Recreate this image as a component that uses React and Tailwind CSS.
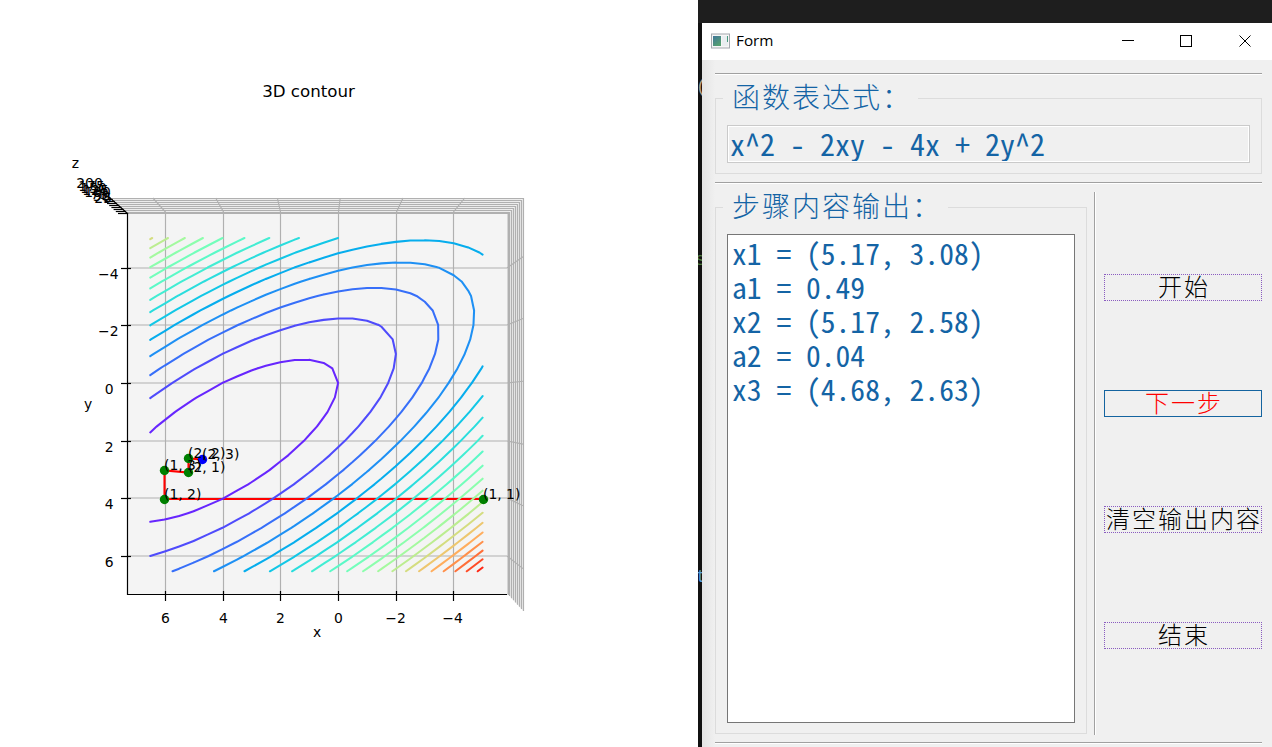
import React from "react";

const X = (x) => 338.1 - 28.9 * x;
const Y = (y) => 382.9 + 28.98 * y;
const f = (x, y) => x * x - 2 * x * y - 4 * x + 2 * y * y;

const rainbow = (t) => {
  const r = Math.min(1, Math.abs(2 * t - 0.5));
  const g = Math.sin(Math.PI * t);
  const b = Math.cos((Math.PI * t) / 2);
  return `rgb(${Math.round(r * 255)},${Math.round(g * 255)},${Math.round(b * 255)})`;
};

// Marching squares over the half-unit sample grid, one path per level.
const contour = (level) => {
  let d = "";
  for (let i = -5; i < 6.5; i += 0.5) {
    for (let j = -5; j < 6.5; j += 0.5) {
      const c = [[i, j], [i + 0.5, j], [i + 0.5, j + 0.5], [i, j + 0.5]];
      const hits = [];
      for (let k = 0; k < 4; k++) {
        const a = c[k];
        const b = c[(k + 1) % 4];
        const fa = f(a[0], a[1]) - level;
        const fb = f(b[0], b[1]) - level;
        if (fa > 0 !== fb > 0) {
          const t = fa / (fa - fb);
          hits.push([a[0] + t * (b[0] - a[0]), a[1] + t * (b[1] - a[1])]);
        }
      }
      for (let k = 0; k + 1 < hits.length; k += 2) {
        const p = hits[k];
        const q = hits[k + 1];
        d += `M${X(p[0]).toFixed(2)} ${Y(p[1]).toFixed(2)}L${X(q[0]).toFixed(2)} ${Y(q[1]).toFixed(2)}`;
      }
    }
  }
  return d;
};

const levels = Array.from({ length: 20 }, (_, i) => i * 10);
const ticks = [[6, 165.5], [4, 223.5], [2, 280.5], [0, 338.5], [-2, 396.5], [-4, 453.5]];
const yTicks = [[-4, 268.5], [-2, 325.5], [0, 383.5], [2, 441.5], [4, 498.5], [6, 556.5]];
const zLabels = [[25, 103, 203], [50, 101.5, 201], [75, 99.5, 199], [100, 97.5, 197], [125, 95.5, 195], [150, 93.5, 193], [175, 91.5, 191], [200, 89.5, 188]];
const minus = (n) => String(n).replace("-", "−");

function Plot() {
  return (
    <svg width="698" height="747" viewBox="0 0 698 747" className="shrink-0 bg-white font-['DejaVu_Sans',sans-serif] text-[13.9px]" fill="#000">
      <rect x="127.5" y="213" width="380" height="381" fill="#f4f4f4" />
      <polygon points="112,198 523,198 508,213 127,213" fill="#ececec" />
      <polygon points="523,198 523,611 508,594 508,213" fill="#ededed" />
      <g stroke="#b0b0b0" strokeWidth="1.15" fill="none">
        {Array.from({ length: 8 }, (_, i) => {
          const o = i * 2;
          return (
            <path key={i} d={`M${126 - o} ${212.5 - o}H${509.5 + o}V${596 + o * 1.08}`} />
          );
        })}
        {ticks.map(([n, x]) => (
          <path key={n} d={`M${x} 594V212L${x + (x - 318) * 0.083} 198`} />
        ))}
        {yTicks.map(([n, y]) => (
          <path key={n} d={`M127 ${y - 0.5}H507L523 ${y + (y - 404) * 0.083 - 0.5}`} />
        ))}
        <path d="M127 213H508.5V595" strokeWidth="2" />
      </g>
      <g stroke="#000" strokeWidth="1.2">
        <path d="M127.5 213.5V594.5H507" fill="none" />
        {ticks.map(([n, x]) => <path key={n} d={`M${x} 591V601`} />)}
        {yTicks.map(([n, y]) => <path key={n} d={`M121 ${y}H131`} />)}
        <path d="M109 197L128 214" />
        {Array.from({ length: 8 }, (_, i) => (
          <path key={i} d={`M${118 - i * 2.2} ${213.5 - i * 2}h10`} />
        ))}
      </g>
      <path d="M483 499H164.500V470.500L188.500 472.500V458.500L202 459.500" fill="none" stroke="#ff0000" strokeWidth="2.1" />
      <g fill="none" strokeWidth="2.05" strokeLinecap="round">
        {levels.map((l) => <path key={l} d={contour(l)} stroke={rainbow((l + 10) / 210)} />)}
      </g>
      <g fill="#008000">
        <circle cx="483.500" cy="499.500" r="4.700" />
        <circle cx="164.500" cy="499.500" r="4.700" />
        <circle cx="164.500" cy="470.500" r="4.700" />
        <circle cx="188.500" cy="472.500" r="4.700" />
        <circle cx="188.500" cy="458.500" r="4.700" />
      </g>
      <circle cx="202.500" cy="459.500" r="4.700" fill="#0000ff" />
      <text x="483" y="499">(1, 1)</text>
      <text x="164" y="499">(1, 2)</text>
      <text x="164" y="470">(1, 3)</text>
      <text x="188" y="472">(2, 1)</text>
      <text x="188" y="458">(2, 2)</text>
      <text x="202" y="459">(2, 3)</text>
      <g textAnchor="middle">
        {ticks.map(([n, x]) => <text key={n} x={n < 0 ? x - 1 : x} y="623">{minus(n)}</text>)}
        <text x="317" y="637">x</text>
        <text x="88" y="409">y</text>
        <text x="75.500" y="168">z</text>
        {zLabels.map(([n, x, y]) => <text key={n} x={x} y={y}>{n}</text>)}
        <text x="308.500" y="97" className="text-[16.67px]">3D contour</text>
      </g>
      <g textAnchor="end">
        {yTicks.map(([n, y]) => <text key={n} x={n < 0 ? 118.5 : 113.5} y={y + 10}>{minus(n)}</text>)}
      </g>
    </svg>
  );
}

function Group({ title, legend, className, children }) {
  return (
    <fieldset className={`flex min-w-0 flex-col border border-[#dcdcdc] px-[11px] ${className}`}>
      <legend className={`-ml-1 h-[30px] whitespace-nowrap pl-[9px] text-[28px] leading-[27px] font-light tracking-[2px] text-[#1464a5] ${legend}`}>{title}</legend>
      {children}
    </fieldset>
  );
}

function HLine() {
  return <div className="h-[2px] w-[547px] shrink-0 border-t border-[#a0a0a0] bg-white" />;
}

function PushButton({ children, active }) {
  return (
    <button
      className={`flex h-[27px] w-[158px] items-center justify-center whitespace-nowrap border pb-1 pl-[2px] text-[24px] leading-none font-light tracking-[2px] ${active ? "border-[#1464a0] text-[#ff0000]" : "border-dotted border-[#8a5cc0] text-black"}`}
    >
      {children}
    </button>
  );
}

const output = ["x1 = (5.17, 3.08)", "a1 = 0.49", "x2 = (5.17, 2.58)", "a2 = 0.04", "x3 = (4.68, 2.63)"];

export default function App() {
  return (
    <div className="flex h-[747px] w-[1272px] overflow-hidden bg-white font-['Noto_Sans_CJK_SC',sans-serif]">
      <Plot />
      <div className="flex h-full w-[574px] flex-col bg-[#1e1e1e] pt-[23px]">
        <div className="flex min-h-0 flex-1">
          <div className="flex w-1 shrink-0 flex-col overflow-hidden bg-[#111] pt-[54px] font-['Liberation_Mono',monospace] text-[18px] leading-5">
            <span className="-ml-[2px] text-[#b5a08c]">(</span>
            <span className="-ml-[3px] mt-[153px] text-[#4c7a3c]">s</span>
            <span className="-ml-[2px] mt-[297px] text-[#569cd6]">t</span>
          </div>
          <div className="flex w-[570px] flex-col bg-[#f0f0f0]">
            <div className="flex h-[37px] shrink-0 items-center bg-white pb-px pl-[9px]">
              <svg width="19" height="16" viewBox="0 0 19 16">
                <defs>
                  <linearGradient id="pane" x1="0" y1="0" x2="0.6" y2="1">
                    <stop offset="0" stopColor="#3f7599" />
                    <stop offset="1" stopColor="#55a070" />
                  </linearGradient>
                </defs>
                <rect x="0.500" y="1" width="18" height="14" fill="#f6f6f6" stroke="#a4a8ae" />
                <rect x="2" y="3" width="8" height="10" fill="url(#pane)" />
                <rect x="11" y="3" width="6" height="10" fill="#e9eef0" />
                <path d="M16.500 3v6" stroke="#4a9a80" />
              </svg>
              <span className="ml-[6px] flex-1 font-['Open_Sans',sans-serif] text-[15.3px] leading-none text-black">Form</span>
              <svg width="150" height="14" viewBox="0 0 150 14" fill="none" stroke="#000" className="shrink-0">
                <path d="M0 6.500h12" />
                <rect x="58.500" y="1.500" width="11" height="11" />
                <path d="M117.500 1.500l11 11M128.500 1.500l-11 11" />
              </svg>
            </div>
            <div className="flex min-h-0 flex-1 flex-col bg-linear-to-r from-[#e4e4e4] to-[#f0f0f0] to-[13px] pt-[13px] pl-[13px]">
              <HLine />
              <Group title="函数表达式：" legend="w-[195px]" className="mt-[8px] h-[91px] w-[547px]">
                <div className="mt-[12px] h-[38px] w-[523px] border border-[#cacaca] p-px">
                  <div className="h-full whitespace-pre bg-[#f0f0f0] pl-px text-[30px] leading-[32px] text-[#1464a5] outline outline-white [font-feature-settings:'hwid']">x^2 - 2xy - 4x + 2y^2</div>
                </div>
              </Group>
              <div className="mt-2"><HLine /></div>
              <div className="flex h-[558px] shrink-0">
                <Group title="步骤内容输出：" legend="w-[225px]" className="mt-[8px] h-[542px] w-[372px]">
                  <div className="mt-[12px] h-[489px] w-[348px] shrink-0 border border-[#767676] bg-white py-px pl-[4px] text-[29.6px] leading-[34px] text-[#1464a5] [font-feature-settings:'hwid']">
                    {output.map((line) => <div key={line} className="h-[34px] whitespace-pre">{line}</div>)}
                  </div>
                </Group>
                <div className="mt-[8px] ml-[7px] h-[543px] w-[2px] border-l border-[#a0a0a0] bg-white" />
                <div className="ml-2 flex flex-col gap-[89px] pt-[90px]">
                  <PushButton>开始</PushButton>
                  <PushButton active>下一步</PushButton>
                  <PushButton>清空输出内容</PushButton>
                  <PushButton>结束</PushButton>
                </div>
              </div>
              <HLine />
            </div>
          </div>
        </div>
      </div>
    </div>
  );
}
